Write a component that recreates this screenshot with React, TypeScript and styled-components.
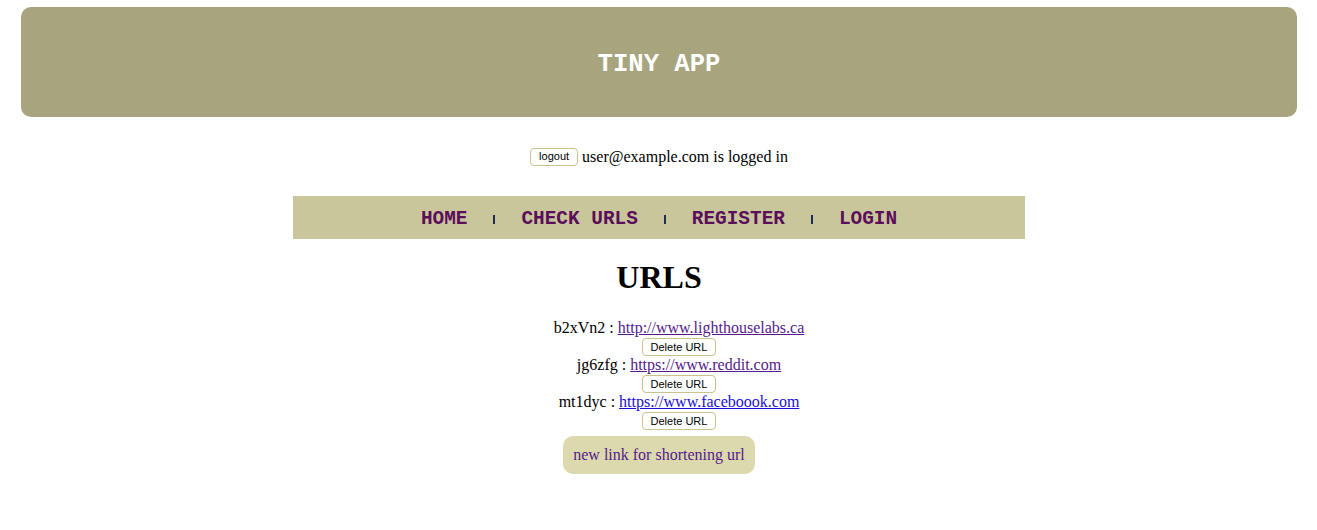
import React from "react";
import styled, { createGlobalStyle } from "styled-components";

const Global = createGlobalStyle`
  html, body { margin: 0; padding: 0; background: #ffffff; }
  body { font-family: "Liberation Serif", "Times New Roman", serif; font-size: 16px; color: #000; }
`;

const Page = styled.div`
  padding: 7px 20px 40px 21px;
  display: flex;
  flex-direction: column;
  align-items: center;
`;

const Header = styled.header`
  align-self: stretch;
  height: 110px;
  background: #a8a47e;
  border-radius: 10px;
  display: flex;
  align-items: center;
  justify-content: center;
  padding-top: 4px;
  box-sizing: border-box;
`;

const Title = styled.h1`
  margin: 0;
  font-family: "Liberation Mono", "Courier New", monospace;
  font-weight: bold;
  font-size: 25.6px;
  color: #ffffff;
`;

const Status = styled.div`
  margin-top: 30px;
  display: flex;
  align-items: center;
  gap: 4px;
  line-height: 19px;
  font-size: 16px;
`;

const SmallButton = styled.button`
  font-family: "Liberation Sans", Arial, sans-serif;
  font-size: 11px;
  line-height: 13px;
  padding: 1px 8px;
  background: #ffffff;
  border: 1px solid #c9c290;
  border-radius: 4px;
  color: #000;
  height: 18px;
  cursor: pointer;
`;

const Nav = styled.nav`
  margin-top: 30px;
  width: 732px;
  height: 43px;
  background: #c9c69c;
  display: flex;
  align-items: center;
  justify-content: center;
  gap: 26px;
`;

const NavLink = styled.a`
  font-family: "Liberation Mono", "Courier New", monospace;
  font-weight: bold;
  font-size: 19.4px;
  color: #5a0f5a;
  text-decoration: none;
  line-height: 20px;
  padding-top: 2px;
`;

const Sep = styled.span`
  display: inline-block;
  width: 2px;
  height: 9px;
  background: #1e2b52;
  margin-top: 4px;
`;

const Heading = styled.h2`
  margin: 20px 0 0;
  font-size: 32px;
  font-weight: bold;
  line-height: 37px;
`;

const List = styled.div`
  margin-top: 23px;
  padding-left: 40px;
  display: flex;
  flex-direction: column;
  align-items: center;
`;

const Item = styled.div`
  display: flex;
  flex-direction: column;
  align-items: center;
`;

const ItemText = styled.div`
  line-height: 18px;
  font-size: 16px;
`;

const UrlLink = styled.a<{ $visited?: boolean }>`
  color: ${(p) => (p.$visited ? "#551a8b" : "#1a0dd8")};
  text-decoration: underline;
`;

const DeleteButton = styled(SmallButton)`
  margin: 1px 0 0;
  padding: 1px 8px;
`;

const NewLink = styled.a`
  margin-top: 6px;
  display: inline-flex;
  align-items: center;
  justify-content: center;
  height: 38px;
  padding: 0 10px;
  box-sizing: border-box;
  background: #dcd9ae;
  border-radius: 10px;
  color: #551a8b;
  text-decoration: none;
  font-size: 16px;
`;

const urls = [
  { id: "b2xVn2", url: "http://www.lighthouselabs.ca", visited: true },
  { id: "jg6zfg", url: "https://www.reddit.com", visited: true },
  { id: "mt1dyc", url: "https://www.faceboook.com", visited: false },
];

const navItems = ["HOME", "CHECK URLS", "REGISTER", "LOGIN"];

export default function App() {
  return (
    <>
      <Global />
      <Page>
        <Header>
          <Title>TINY APP</Title>
        </Header>
        <Status>
          <SmallButton>logout</SmallButton>
          <span>user@example.com is logged in</span>
        </Status>
        <Nav>
          {navItems.map((n, i) => (
            <React.Fragment key={n}>
              {i > 0 && <Sep />}
              <NavLink href="#">{n}</NavLink>
            </React.Fragment>
          ))}
        </Nav>
        <Heading>URLS</Heading>
        <List>
          {urls.map((u) => (
            <Item key={u.id}>
              <ItemText>
                {u.id} : <UrlLink href="#" $visited={u.visited}>{u.url}</UrlLink>
              </ItemText>
              <DeleteButton>Delete URL</DeleteButton>
            </Item>
          ))}
        </List>
        <NewLink href="#">new link for shortening url</NewLink>
      </Page>
    </>
  );
}
